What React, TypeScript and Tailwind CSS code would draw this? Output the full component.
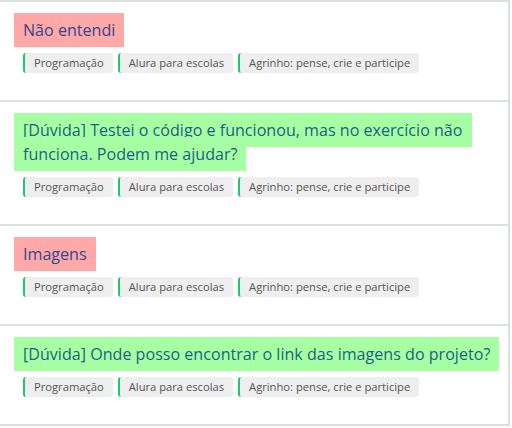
const tags = ["Programação", "Alura para escolas", "Agrinho: pense, crie e participe"];

type Topic = { title: string; solved: boolean };

const topics: Topic[] = [
  { title: "Não entendi", solved: false },
  {
    title: "[Dúvida] Testei o código e funcionou, mas no exercício não funciona. Podem me ajudar?",
    solved: true,
  },
  { title: "Imagens", solved: false },
  { title: "[Dúvida] Onde posso encontrar o link das imagens do projeto?", solved: true },
];

function TopicCard({ topic }: { topic: Topic }) {
  return (
    <div className="bg-white border-r-2 border-b-2 border-[#dcdfe2] pl-[14px] pr-[4px] pt-4 pb-[27px]">
      <h3 className="text-[16.1px] leading-[24px] font-normal">
        <span
          className={
            topic.solved
              ? "bg-[#a7ffa3] text-[#1d5f80] px-[9px] py-[6px] box-decoration-clone"
              : "bg-[#ffa8a8] text-[#30468f] px-[9px] py-[6px] box-decoration-clone"
          }
        >
          {topic.title}
        </span>
      </h3>
      <div className="flex gap-[5px] ml-[9px] mt-[11px]">
        {tags.map((tag) => (
          <span
            key={tag}
            className="h-5 flex items-center px-[9px] bg-[#eeeeee] border-l-2 border-[#1ec86c] rounded-[3px] text-[11.2px] text-[#555555]"
          >
            {tag}
          </span>
        ))}
      </div>
    </div>
  );
}

export default function App() {
  return (
    <div
      className="w-[512px] h-[428px] bg-white overflow-hidden"
      style={{ fontFamily: '"Open Sans", "Liberation Sans", sans-serif' }}
    >
      <div className="w-[510px] border-t-2 border-[#dcdfe2]">
        {topics.map((topic) => (
          <TopicCard key={topic.title} topic={topic} />
        ))}
      </div>
    </div>
  );
}
